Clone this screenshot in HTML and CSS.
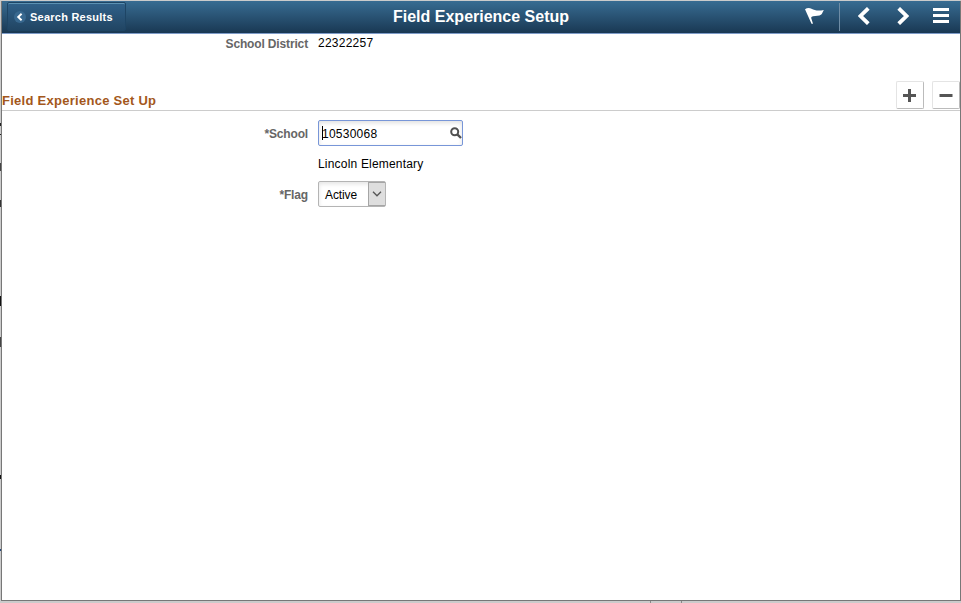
FILE: index.html
```
<!DOCTYPE html>
<html lang="en">
<head>
<meta charset="utf-8">
<title>Field Experience Setup</title>
<link rel="stylesheet" href="styles.css">
</head>
<body>
<div class="window">
  <header class="banner">
    <a class="back">
      <svg class="back-icon" width="12" height="12" viewBox="0 0 12 12"><circle cx="6" cy="6" r="6" fill="#38688f"/><path d="M7.600 2.700 4.200 6l3.400 3.300" fill="none" stroke="#fff" stroke-width="1.900"/></svg>
      <span class="back-text">Search Results</span>
    </a>
    <h1 class="title">Field Experience Setup</h1>
    <nav class="tools">
      <svg class="flag-icon" width="19" height="18" viewBox="0 0 19 18"><path d="M0 2.200C2 .800 4.500.500 6.500 1.800c3.500 2 7.500 2.200 12.300 1.100-1 1.500-1.200 3.200-2.500 4.500-2.300 2-5.300 1-8.300 1.900-1 .3-1.600.7-1.900 1.400L8 16.800H6.500z" fill="#fff"/></svg>
      <span class="divider"></span>
      <svg class="prev" width="12" height="18" viewBox="0 0 12 18"><path d="M10.300 1.300 2.500 9l7.800 7.700" fill="none" stroke="#fff" stroke-width="3.800"/></svg>
      <svg class="next" width="12" height="18" viewBox="0 0 12 18"><path d="M1.700 1.300 9.500 9l-7.800 7.700" fill="none" stroke="#fff" stroke-width="3.800"/></svg>
      <svg class="menu" width="16" height="15" viewBox="0 0 16 15"><path d="M0 0h16v3H0zM0 6h16v3H0zM0 12h16v3H0z" fill="#fff"/></svg>
    </nav>
  </header>
  <main>
    <div class="row district"><span class="label">School District</span><span class="value number">22322257</span></div>
    <div class="section">
      <h2>Field Experience Set Up</h2>
      <button class="square"><svg width="14" height="14" viewBox="0 0 14 14"><path d="M0 7.500h13M6.500 1v13" stroke="#555" stroke-width="3"/></svg></button>
      <button class="square last"><svg width="14" height="14" viewBox="0 0 14 14"><path d="M.5 7.500h13" stroke="#555" stroke-width="3"/></svg></button>
    </div>
    <div class="row school"><span class="label">*School</span>
      <div class="lookup"><i class="caret"></i><span class="number">10530068</span>
        <svg width="12" height="12" viewBox="0 0 12 12"><circle cx="4.700" cy="4.700" r="3.500" fill="none" stroke="#505050" stroke-width="2"/><path d="m7.300 7.300 3.700 3.700" stroke="#505050" stroke-width="2.400"/></svg>
      </div>
    </div>
    <div class="row name"><span class="label"></span><span class="lincoln">Lincoln Elementary</span></div>
    <div class="row flag"><span class="label">*Flag</span>
      <div class="select"><span>Active</span><b><svg width="10" height="6" viewBox="0 0 10 6"><path d="m1 .8 4 4 4-4" fill="none" stroke="#555" stroke-width="1.300"/></svg></b></div>
    </div>
  </main>
</div>
</body>
</html>
```
FILE: styles.css
```
* { box-sizing: border-box; }
body {
  margin: 0;
  width: 961px;
  height: 603px;
  overflow: hidden;
  padding: 1px 0 2px 1px;
  background-color: #cbcbcb;
  background-image:
    linear-gradient(#222, #222), linear-gradient(#222, #222), linear-gradient(#444, #444),
    linear-gradient(#333, #333), linear-gradient(#111, #111), linear-gradient(#444, #444),
    linear-gradient(#111, #111), linear-gradient(#27497a, #27497a),
    linear-gradient(#888, #888), linear-gradient(#888, #888);
  background-repeat: no-repeat;
  background-size: 1px 3px, 1px 1px, 1px 8px, 1px 7px, 1px 10px, 1px 10px, 1px 4px, 1px 2px, 1px 2px, 1px 2px;
  background-position: 0 123px, 0 134px, 0 163px, 0 200px, 0 296px, 0 337px, 0 475px, 0 549px, 650px 601px, 681px 601px;
  font: 12px "Liberation Sans", Arial, sans-serif;
  color: #000;
}
.window {
  height: 600px;
  border: 1px solid #777;
  border-top: 0;
  background: #fff;
}
.banner {
  display: flex;
  height: 33px;
  border-bottom: 1px solid #7d9bc8;
  background: linear-gradient(#386c92, #193853);
  background-clip: padding-box;
  color: #fff;
}
.back {
  display: flex;
  align-items: center;
  width: 119px;
  height: 29px;
  margin: 1px 0 0 5px;
  padding-left: 6px;
  border: 1px solid #1e4565;
  border-radius: 2px;
  background: linear-gradient(#30618a, #214563);
  box-shadow: inset 0 1px #5b91b3;
  font-weight: bold;
  font-size: 11px;
}
.back-text { margin-left: 4px; letter-spacing: .24px; white-space: nowrap; }
.title {
  margin: 0 0 0 267px;
  width: 200px;
  font-size: 16px;
  line-height: 31px;
  font-weight: bold;
  white-space: nowrap;
}
.tools { display: flex; align-items: flex-start; margin-left: 212px; }
.tools svg { flex: none; }
.flag-icon { margin-top: 6px; }
.divider { width: 1px; height: 28px; margin: 2px 0 0 15px; background: #6e8ca5; }
.prev { margin: 6px 0 0 18px; }
.next { margin: 6px 0 0 27px; }
.menu { margin: 7px 0 0 24px; }
.row { display: flex; align-items: center; }
.label {
  width: 306px;
  margin-right: 10px;
  text-align: right;
  font-weight: bold;
  letter-spacing: -.15px;
  color: #666;
}
.number { letter-spacing: .25px; }
.lincoln { letter-spacing: .19px; }
.district { height: 19px; }
.district .value { padding-bottom: 2px; }
.section {
  display: flex;
  align-items: flex-start;
  height: 58px;
  padding-top: 28px;
  border-bottom: 1px solid #ccc;
}
h2 {
  flex: 1;
  margin: 12px 0 0;
  font-size: 13px;
  line-height: 16px;
  letter-spacing: .27px;
  color: #a3571b;
}
.square {
  display: flex;
  align-items: center;
  justify-content: center;
  width: 28px;
  height: 28px;
  margin: 0 8px 0 0;
  padding: 0;
  border: 1px solid #e4e4e4;
  border-right-color: #bbb;
  border-bottom-color: #bbb;
  border-radius: 2px;
  background: #fff;
}
.last { margin: 0; }
.school { height: 26px; margin-top: 9px; }
.school .label, .flag .label, .lookup .number { padding-top: 2px; }
.lookup {
  display: flex;
  align-items: center;
  width: 145px;
  height: 26px;
  padding-left: 3px;
  border: 1px solid #7896d8;
  border-radius: 2px;
  box-shadow: inset 0 2px 4px #e0e0e0;
}
.lookup svg { margin-left: auto; }
.caret { width: 1px; height: 14px; margin-right: -1px; background: #000; }
.name { height: 20px; margin-top: 8px; }
.flag { height: 26px; margin-top: 7px; }
.select {
  display: flex;
  width: 68px;
  height: 26px;
  border: 1px solid #b4b4b4;
  border-radius: 2px;
  box-shadow: inset 0 2px 4px #e4e4e4;
}
.select span { flex: 1; padding-left: 6px; line-height: 26px; letter-spacing: -.1px; }
.select b {
  display: flex;
  align-items: center;
  justify-content: center;
  width: 17px;
  border: 1px solid #a5a5a5;
  border-right: 0;
  background: #dedede;
}
```
